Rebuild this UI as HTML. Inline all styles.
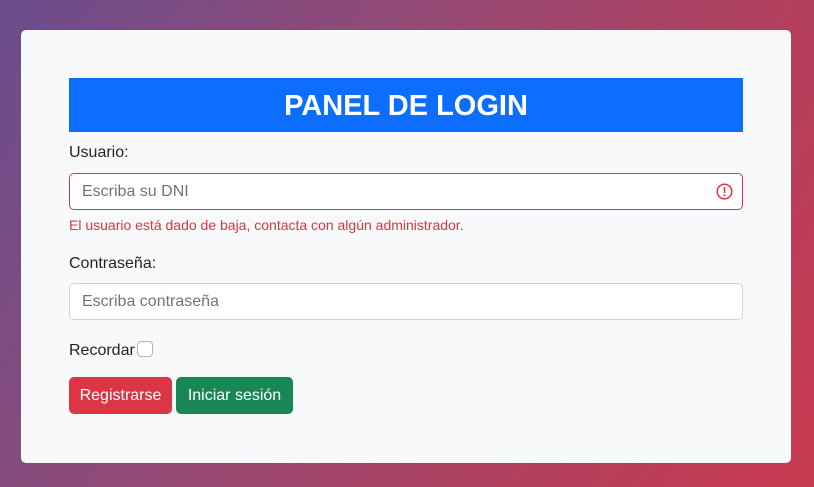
<!DOCTYPE html>
<html><head><meta charset="utf-8"><style>
*{box-sizing:border-box;margin:0;padding:0}
body{width:814px;height:487px;overflow:hidden;font-family:"Liberation Sans",sans-serif;background:linear-gradient(120deg,#6a4d8c 0%,#8f4a78 35%,#b0405f 70%,#c8394f 100%);position:relative}
.card{position:absolute;left:21px;top:30px;width:770px;height:433px;background:#f8f9fa;border-radius:5px}
.hdr{position:absolute;left:48px;top:48px;width:674px;height:54px;background:#0d6efd;color:#fff;font-weight:bold;font-size:29px;text-align:center;line-height:57px}
.lbl{position:absolute;left:48px;font-size:16px;color:#212529}
.inp{position:absolute;left:48px;width:674px;height:37px;background:#fff;border:1px solid #ced4da;border-radius:5px;font-size:16px;color:#6c757d;padding-left:12px;line-height:35px}
.err{border-color:#dc3545}
.msg{position:absolute;left:48px;top:187px;font-size:14px;color:#dc3545}
.btn{position:absolute;top:347px;height:37px;color:#fff;font-size:16px;line-height:38px;text-align:center;border-radius:5px}
</style></head><body>
<div class="card">
<div class="hdr">PANEL DE LOGIN</div>
<div class="lbl" style="top:114px">Usuario:</div>
<div class="inp err" style="top:143px">Escriba su DNI
<svg style="position:absolute;right:9px;top:9px" width="17" height="17" viewBox="0 0 17 17"><circle cx="8.5" cy="8.5" r="7.3" fill="none" stroke="#dc3545" stroke-width="1.5"/><rect x="7.7" y="4" width="1.6" height="6" fill="#dc3545"/><circle cx="8.5" cy="12.2" r="1" fill="#dc3545"/></svg></div>
<div class="msg">El usuario está dado de baja, contacta con algún administrador.</div>
<div class="lbl" style="top:225px">Contraseña:</div>
<div class="inp" style="top:253px">Escriba contraseña</div>
<div class="lbl" style="top:312px">Recordar</div>
<div style="position:absolute;left:116px;top:311px;width:16px;height:16px;border:1px solid #adb5bd;border-radius:4px;background:#fff"></div>
<div class="btn" style="left:48px;width:103px;background:#dc3545">Registrarse</div>
<div class="btn" style="left:155px;width:117px;background:#198754">Iniciar sesión</div>
</div>
</body></html>
